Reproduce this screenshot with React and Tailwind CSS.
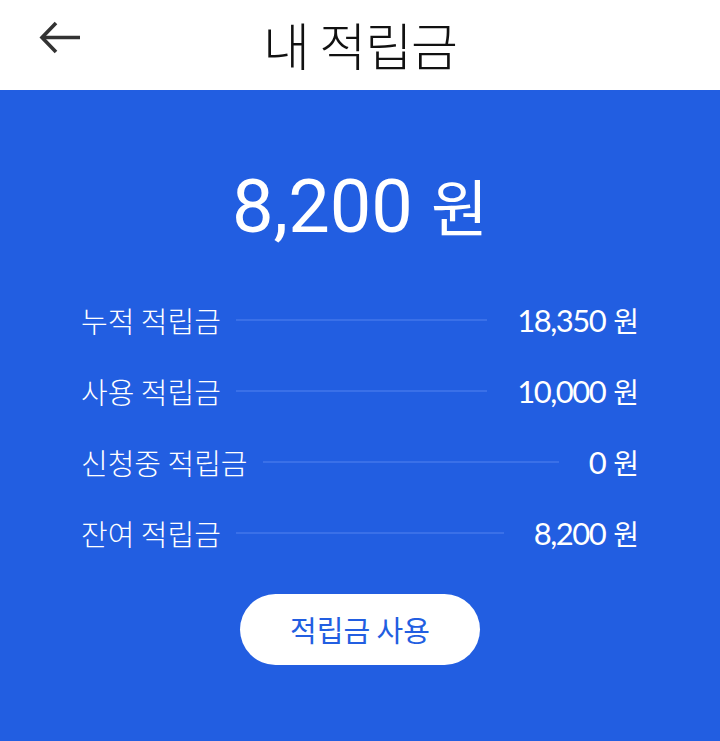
import React from "react";

const rows = [
  { label: "누적 적립금", value: "18,350" },
  { label: "사용 적립금", value: "10,000" },
  { label: "신청중 적립금", value: "0" },
  { label: "잔여 적립금", value: "8,200" },
];

export default function App() {
  return (
    <div className="w-[720px] h-[741px] flex flex-col bg-[#225ee1]" style={{ fontFamily: '"Noto Sans CJK KR", sans-serif' }}>
      <header className="relative h-[90px] bg-white flex items-center justify-center shrink-0">
        <button className="absolute left-[39px] top-[21px] w-[42px] h-[33px] flex items-center justify-center">
          <svg width="42" height="33" viewBox="0 0 42 33" fill="none" stroke="#333" strokeWidth="3.6">
            <path d="M3 16.5 H41" />
            <path d="M17 2 L3 16.5 L17 31" strokeLinejoin="miter" />
          </svg>
        </button>
        <h1 className="text-[51px] font-light text-[#111] leading-none -mt-[2px] tracking-[-1px]" style={{ fontFamily: '"Noto Sans CJK KR", sans-serif' }}>
          내 적립금
        </h1>
      </header>
      <main className="flex-1 flex flex-col items-center pt-[80px]">
        <div className="text-white text-[74px] leading-none flex items-baseline" style={{ fontFamily: 'Roboto, "Noto Sans CJK KR", sans-serif' }}>
          <span>8,200</span>
          <span className="ml-[18px] text-[62px]" style={{ fontFamily: '"Noto Sans CJK KR", sans-serif' }}>원</span>
        </div>
        <div className="w-full pl-[81px] pr-[81px] mt-[56px] flex flex-col gap-[31px]">
          {rows.map((r) => (
            <div key={r.label} className="flex items-center h-[40px] text-white">
              <span className="text-[29px] leading-none font-light">{r.label}</span>
              <div className="flex-1 h-[2px] bg-[#3a70e8] ml-[15px] mr-[30px]" />
              <span className="text-[31px] leading-none tracking-[-1.5px]" style={{ fontFamily: 'Lato, sans-serif' }}>{r.value}</span>
              <span className="ml-[8px] text-[28px] leading-none">원</span>
            </div>
          ))}
        </div>
        <button className="mt-[41px] w-[240px] h-[71px] rounded-full bg-white text-[#225ee1] text-[29px] leading-none">
          적립금 사용
        </button>
      </main>
    </div>
  );
}
